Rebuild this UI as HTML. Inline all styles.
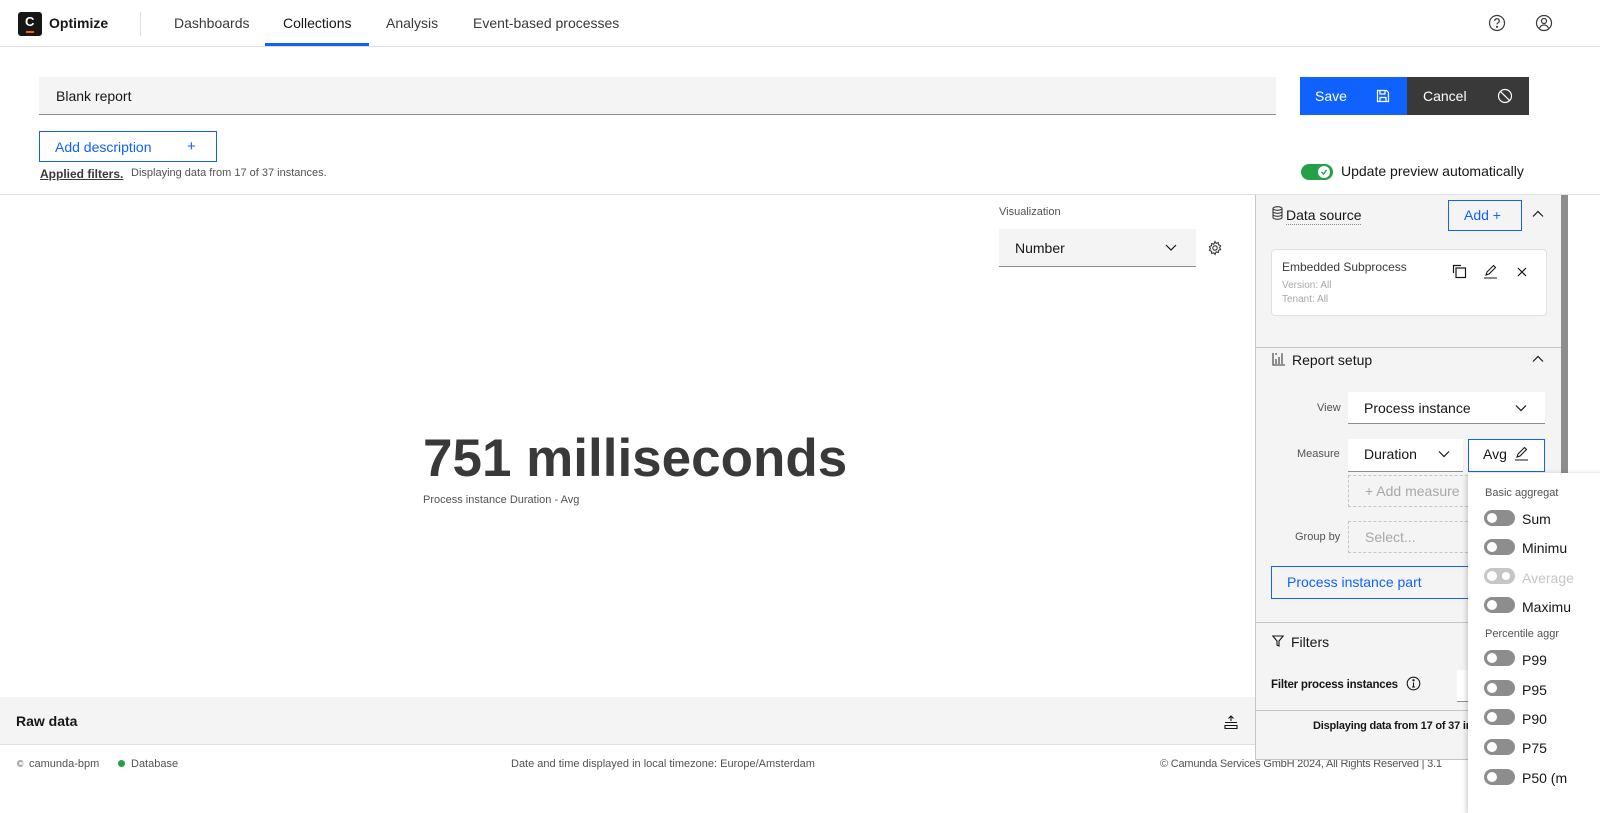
<!DOCTYPE html>
<html><head><meta charset="utf-8"><style>
*{box-sizing:border-box;margin:0;padding:0}
body{width:1600px;height:800px;overflow:hidden;background:#fff;font-family:"Liberation Sans",sans-serif;color:#161616;position:relative}
.a{position:absolute}
.t{white-space:nowrap}
.tog{position:absolute;width:31px;height:16px;border-radius:8px;background:#8d8d8d}
.tog::after{content:"";position:absolute;left:3px;top:3px;width:10px;height:10px;border-radius:50%;background:#fff}
</style></head><body>
<!-- header -->
<div class="a" style="left:0;top:46px;width:1600px;height:1px;background:#e0e0e0"></div>
<div class="a" style="left:18px;top:12px;width:24px;height:24px;background:#161616;border-radius:3px"></div>
<div class="a t" style="left:25px;top:14px;color:#fff;font-weight:bold;font-size:13px">C</div>
<div class="a" style="left:26px;top:31px;width:8px;height:2px;background:#fc5d0d"></div>
<div class="a t" style="left:49px;top:15px;font-weight:bold;font-size:14px">Optimize</div>
<div class="a" style="left:140px;top:12px;width:1px;height:24px;background:#e0e0e0"></div>
<div class="a t" style="left:174px;top:15px;font-size:14px;color:#393939">Dashboards</div>
<div class="a t" style="left:283px;top:15px;font-size:14px;color:#161616">Collections</div>
<div class="a" style="left:265px;top:43px;width:104px;height:3px;background:#0f62fe"></div>
<div class="a t" style="left:386px;top:15px;font-size:14px;color:#393939">Analysis</div>
<div class="a t" style="left:473px;top:15px;font-size:14px;color:#393939">Event-based processes</div>
<svg class="a" style="left:1488px;top:14px" width="18" height="18" viewBox="0 0 18 18" fill="none" stroke="#393939" stroke-width="1.2"><circle cx="9" cy="9" r="7.5"/><path d="M6.8 7a2.2 2.2 0 1 1 3 2c-.6.3-.8.7-.8 1.4"/><circle cx="9" cy="12.8" r=".5" fill="#393939"/></svg>
<svg class="a" style="left:1535px;top:14px" width="18" height="18" viewBox="0 0 18 18" fill="none" stroke="#393939" stroke-width="1.2"><circle cx="9" cy="9" r="7.5"/><circle cx="9" cy="7" r="2.5"/><path d="M4.5 14c1-2 2.5-3 4.5-3s3.5 1 4.5 3"/></svg>
<!-- title row -->
<div class="a" style="left:39px;top:77px;width:1237px;height:38px;background:#f4f4f4;border-bottom:1px solid #8d8d8d"></div>
<div class="a t" style="left:56px;top:88px;font-size:14px">Blank report</div>
<div class="a" style="left:1300px;top:77px;width:107px;height:38px;background:#0f62fe"></div>
<div class="a t" style="left:1315px;top:88px;font-size:14px;color:#fff">Save</div>
<svg class="a" style="left:1376px;top:89px" width="14" height="14" viewBox="0 0 14 14" fill="none" stroke="#fff" stroke-width="1.2"><path d="M1.5 1.5h9l2 2v9h-11z"/><path d="M4 1.5v3.5h5V1.5M4 12.5V8.5h6v4"/></svg>
<div class="a" style="left:1407px;top:77px;width:122px;height:38px;background:#393939"></div>
<div class="a t" style="left:1423px;top:88px;font-size:14px;color:#fff">Cancel</div>
<svg class="a" style="left:1497px;top:88px" width="16" height="16" viewBox="0 0 16 16" fill="none" stroke="#fff" stroke-width="1.2"><circle cx="8" cy="8" r="6.5"/><path d="M3.4 3.4l9.2 9.2"/></svg>
<div class="a" style="left:39px;top:131px;width:178px;height:31px;border:1px solid #0f62fe"></div>
<div class="a t" style="left:55px;top:139px;font-size:14px;color:#0f62fe">Add description</div>
<div class="a t" style="left:187px;top:138px;font-size:15px;color:#0f62fe">+</div>
<div class="a t" style="left:40px;top:167px;font-size:12px;font-weight:bold;color:#393939;text-decoration:underline">Applied filters.</div>
<div class="a t" style="left:131px;top:167px;font-size:11px;color:#525252">Displaying data from 17 of 37 instances.</div>
<div class="a" style="left:1301px;top:164px;width:32px;height:16px;border-radius:8px;background:#24a148"></div>
<div class="a" style="left:1318px;top:166px;width:12px;height:12px;border-radius:50%;background:#fff"></div>
<svg class="a" style="left:1320px;top:168px" width="8" height="8" viewBox="0 0 8 8"><path d="M1.5 4l2 2 3-4" fill="none" stroke="#24a148" stroke-width="1.4"/></svg>
<div class="a t" style="left:1341px;top:163px;font-size:14px;color:#161616">Update preview automatically</div>
<div class="a" style="left:0;top:194px;width:1600px;height:1px;background:#e0e0e0"></div>
<!-- main -->
<div class="a t" style="left:999px;top:206px;font-size:11px;color:#525252">Visualization</div>
<div class="a" style="left:999px;top:229px;width:197px;height:38px;background:#f4f4f4;border-bottom:1px solid #8d8d8d"></div>
<div class="a t" style="left:1015px;top:240px;font-size:14px">Number</div>
<svg class="a" style="left:1165px;top:242px" width="12" height="10" viewBox="0 0 12 10"><path d="M1 3l5 5 5-5" fill="none" stroke="#161616" stroke-width="1.2"/></svg>
<svg class="a" style="left:1207px;top:240px" width="16" height="16" viewBox="0 0 16 16" fill="none" stroke="#393939" stroke-width="1.1"><circle cx="8" cy="8" r="2.2"/><path d="M8 1.5l1.2 1.8 2.1-.6.3 2.1 2 .9-1 1.9 1 1.9-2 .9-.3 2.1-2.1-.6L8 14.5l-1.2-1.7-2.1.6-.3-2.1-2-.9 1-1.9-1-1.9 2-.9.3-2.1 2.1.6z"/></svg>
<div class="a t" style="left:423px;top:428px;font-size:53px;font-weight:bold;color:#393939">751 milliseconds</div>
<div class="a t" style="left:423px;top:494px;font-size:11px;color:#525252">Process instance Duration - Avg</div>
<div class="a" style="left:0;top:697px;width:1255px;height:48px;background:#f4f4f4;border-bottom:1px solid #e0e0e0"></div>
<div class="a t" style="left:16px;top:713px;font-size:14px;font-weight:bold">Raw data</div>
<svg class="a" style="left:1223px;top:714px" width="16" height="16" viewBox="0 0 16 16" fill="none" stroke="#161616" stroke-width="1.1"><path d="M2 8.5h12M2 11.5h12v3H2zM8 2v5M5.5 4.5L8 2l2.5 2.5"/></svg>
<!-- footer -->
<div class="a" style="left:17px;top:760px;width:7px;height:7px;border-radius:50%;border:2px solid #a8a8a8;border-right-color:#e0e0e0"></div>
<div class="a t" style="left:29px;top:758px;font-size:11px;color:#525252">camunda-bpm</div>
<div class="a" style="left:118px;top:760px;width:7px;height:7px;border-radius:50%;background:#24a148"></div>
<div class="a t" style="left:131px;top:758px;font-size:11px;color:#525252">Database</div>
<div class="a t" style="left:511px;top:758px;font-size:11px;color:#525252">Date and time displayed in local timezone: Europe/Amsterdam</div>
<div class="a t" style="left:1160px;top:758px;font-size:11px;color:#525252;letter-spacing:-0.2px">© Camunda Services GmbH 2024, All Rights Reserved | 3.1</div>
<!-- right panel -->
<div class="a" style="left:1255px;top:195px;width:313px;height:565px;background:#f4f4f4;border-left:1px solid #c6c6c6;border-bottom:1px solid #c6c6c6"></div>
<div class="a" style="left:1561px;top:195px;width:7px;height:340px;background:#8d8d8d"></div>
<svg class="a" style="left:1272px;top:206px" width="11" height="14" viewBox="0 0 11 14" fill="none" stroke="#393939" stroke-width="1.1"><ellipse cx="5.5" cy="2.5" rx="4.5" ry="1.8"/><path d="M1 2.5v9c0 1 2 1.8 4.5 1.8S10 12.5 10 11.5v-9M1 5.5c0 1 2 1.8 4.5 1.8S10 6.5 10 5.5M1 8.5c0 1 2 1.8 4.5 1.8S10 9.5 10 8.5"/></svg>
<div class="a t" style="left:1286px;top:207px;font-size:14px;color:#161616;border-bottom:1px dotted #8d8d8d;padding-bottom:1px">Data source</div>
<div class="a" style="left:1448px;top:200px;width:74px;height:31px;border:1px solid #0f62fe"></div>
<div class="a t" style="left:1464px;top:207px;font-size:14px;color:#0f62fe">Add +</div>
<svg class="a" style="left:1532px;top:210px" width="12" height="8" viewBox="0 0 12 8"><path d="M1 6.5l5-5 5 5" fill="none" stroke="#161616" stroke-width="1.2"/></svg>
<div class="a" style="left:1271px;top:249px;width:276px;height:67px;background:#fff;border:1px solid #e0e0e0;border-radius:4px"></div>
<div class="a t" style="left:1282px;top:260px;font-size:12px;color:#393939">Embedded Subprocess</div>
<div class="a t" style="left:1282px;top:280px;font-size:10px;color:#a8a8a8">Version: All</div>
<div class="a t" style="left:1282px;top:294px;font-size:10px;color:#a8a8a8">Tenant: All</div>
<svg class="a" style="left:1452px;top:264px" width="15" height="15" viewBox="0 0 15 15" fill="none" stroke="#161616" stroke-width="1.2"><path d="M1.5 9V1.5H9"/><rect x="4" y="4" width="9.5" height="9.5"/></svg>
<svg class="a" style="left:1483px;top:264px" width="15" height="15" viewBox="0 0 15 15" fill="none" stroke="#161616" stroke-width="1.1"><path d="M1 14h13M3 11l1-3 6.5-6.5 2 2L6 10z"/></svg>
<svg class="a" style="left:1517px;top:267px" width="10" height="10" viewBox="0 0 10 10"><path d="M1 1l8 8M9 1L1 9" stroke="#161616" stroke-width="1.2"/></svg>
<div class="a" style="left:1256px;top:347px;width:305px;height:1px;background:#c6c6c6"></div>
<svg class="a" style="left:1272px;top:352px" width="14" height="14" viewBox="0 0 14 14" fill="none" stroke="#393939" stroke-width="1.1"><path d="M1 1v12h12M4 12V7M7 12V5M10 12V3M3 2h2M9 2h2"/></svg>
<div class="a t" style="left:1292px;top:352px;font-size:14px">Report setup</div>
<svg class="a" style="left:1532px;top:355px" width="12" height="8" viewBox="0 0 12 8"><path d="M1 6.5l5-5 5 5" fill="none" stroke="#161616" stroke-width="1.2"/></svg>
<div class="a t" style="left:1317px;top:402px;font-size:11px;color:#525252">View</div>
<div class="a" style="left:1348px;top:392px;width:197px;height:32px;background:#fff;border-bottom:1px solid #8d8d8d"></div>
<div class="a t" style="left:1364px;top:400px;font-size:14px">Process instance</div>
<svg class="a" style="left:1515px;top:404px" width="12" height="8" viewBox="0 0 12 8"><path d="M1 1.5l5 5 5-5" fill="none" stroke="#161616" stroke-width="1.2"/></svg>
<div class="a t" style="left:1297px;top:448px;font-size:11px;color:#525252">Measure</div>
<div class="a" style="left:1348px;top:439px;width:115px;height:33px;background:#fff;border-bottom:1px solid #8d8d8d"></div>
<div class="a t" style="left:1364px;top:446px;font-size:14px">Duration</div>
<svg class="a" style="left:1438px;top:450px" width="12" height="8" viewBox="0 0 12 8"><path d="M1 1.5l5 5 5-5" fill="none" stroke="#161616" stroke-width="1.2"/></svg>
<div class="a" style="left:1468px;top:439px;width:77px;height:33px;background:#fff;border:1px solid #0f62fe"></div>
<div class="a t" style="left:1483px;top:446px;font-size:14px">Avg</div>
<svg class="a" style="left:1514px;top:446px" width="15" height="15" viewBox="0 0 15 15" fill="none" stroke="#161616" stroke-width="1.1"><path d="M1 14h13M3 11l1-3 6.5-6.5 2 2L6 10z"/></svg>
<div class="a" style="left:1348px;top:475px;width:130px;height:32px;border:1px dashed #c6c6c6"></div>
<div class="a t" style="left:1365px;top:483px;font-size:14px;color:#a8a8a8">+ Add measure</div>
<div class="a t" style="left:1295px;top:531px;font-size:11px;color:#525252">Group by</div>
<div class="a" style="left:1348px;top:521px;width:130px;height:32px;border:1px dashed #c6c6c6"></div>
<div class="a t" style="left:1365px;top:529px;font-size:14px;color:#a8a8a8">Select...</div>
<div class="a" style="left:1271px;top:566px;width:210px;height:33px;border:1px solid #0f62fe"></div>
<div class="a t" style="left:1287px;top:574px;font-size:14px;color:#0f62fe">Process instance part</div>
<div class="a" style="left:1256px;top:622px;width:305px;height:1px;background:#c6c6c6"></div>
<svg class="a" style="left:1272px;top:635px" width="12" height="12" viewBox="0 0 12 12"><path d="M.8 1h10.4L7 6v5L5 10V6z" fill="none" stroke="#161616" stroke-width="1.1"/></svg>
<div class="a t" style="left:1291px;top:634px;font-size:14px">Filters</div>
<div class="a t" style="left:1271px;top:679px;font-size:11.5px;font-weight:bold;letter-spacing:-0.2px">Filter process instances</div>
<svg class="a" style="left:1406px;top:676px" width="15" height="15" viewBox="0 0 15 15" fill="none" stroke="#161616" stroke-width="1.1"><circle cx="7.5" cy="7.5" r="6.3"/><path d="M7.5 6.5V11M6 11h3"/><circle cx="7.5" cy="4.3" r=".6" fill="#161616"/></svg>
<div class="a" style="left:1457px;top:670px;width:20px;height:32px;background:#fff;border-bottom:1px solid #8d8d8d"></div>
<div class="a" style="left:1256px;top:710px;width:305px;height:1px;background:#c6c6c6"></div>
<div class="a t" style="left:1313px;top:720px;font-size:11px;font-weight:bold;color:#161616;letter-spacing:-0.2px">Displaying data from 17 of 37 in</div>
<!-- dropdown -->
<div class="a" style="left:1468px;top:473px;width:140px;height:340px;background:#fff;box-shadow:0 2px 6px rgba(0,0,0,.3)"></div>
<div class="a t" style="left:1485px;top:487px;font-size:11px;color:#525252">Basic aggregat</div>
<div class="tog" style="left:1484px;top:510px"></div><div class="a t" style="left:1522px;top:511px;font-size:14px">Sum</div>
<div class="tog" style="left:1484px;top:539px"></div><div class="a t" style="left:1522px;top:540px;font-size:14px">Minimu</div>
<div class="tog" style="left:1484px;top:568px;background:#c6c6c6"></div><div class="a" style="left:1500px;top:570px;width:12px;height:12px;border-radius:50%;background:#fff;border:2px solid #c6c6c6"></div><div class="a t" style="left:1522px;top:570px;font-size:14px;color:#c6c6c6">Average</div>
<div class="tog" style="left:1484px;top:597px"></div><div class="a t" style="left:1522px;top:599px;font-size:14px">Maximu</div>
<div class="a t" style="left:1485px;top:628px;font-size:11px;color:#525252">Percentile aggr</div>
<div class="tog" style="left:1484px;top:650px"></div><div class="a t" style="left:1522px;top:652px;font-size:14px">P99</div>
<div class="tog" style="left:1484px;top:680px"></div><div class="a t" style="left:1522px;top:682px;font-size:14px">P95</div>
<div class="tog" style="left:1484px;top:709px"></div><div class="a t" style="left:1522px;top:711px;font-size:14px">P90</div>
<div class="tog" style="left:1484px;top:739px"></div><div class="a t" style="left:1522px;top:740px;font-size:14px">P75</div>
<div class="tog" style="left:1484px;top:769px"></div><div class="a t" style="left:1522px;top:770px;font-size:14px">P50 (m</div>
</body></html>
